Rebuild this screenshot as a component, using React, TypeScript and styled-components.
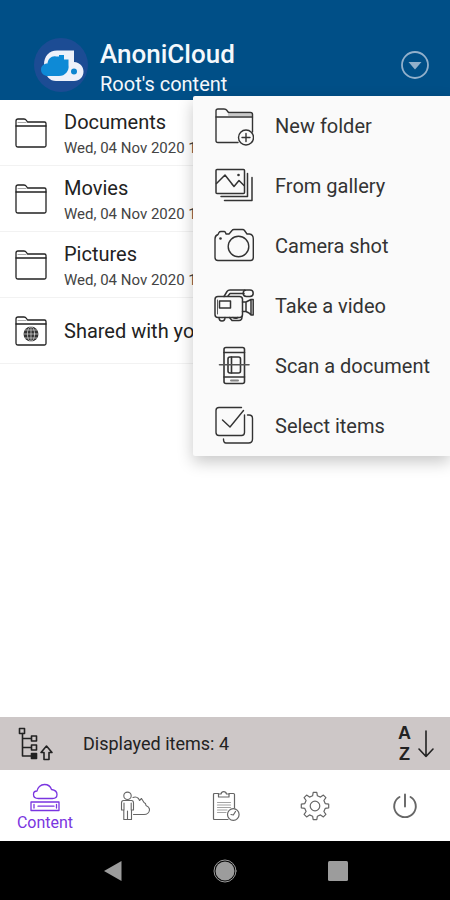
import React from "react";
import styled, { createGlobalStyle } from "styled-components";

const GlobalStyle = createGlobalStyle`
  * { box-sizing: border-box; }
  body { margin: 0; background: #fff; font-family: Roboto, "Noto Sans", sans-serif; color: #222; }
  button { border: 0; padding: 0; background: none; font: inherit; color: inherit; cursor: pointer; }
  ul { list-style: none; margin: 0; padding: 0; }
  svg { display: block; flex: none; }
`;

const Screen = styled.div`
  display: flex;
  flex-direction: column;
  min-height: 100vh;
  overflow: hidden;
`;

const Header = styled.header`
  position: relative;
  z-index: 1;
  display: flex;
  align-items: center;
  gap: 12px;
  height: 100px;
  padding: 30px 20px 0 34px;
  background: #004f87;
  color: #f4f8fc;
`;

const Titles = styled.div`
  flex: 1;
  padding-top: 8px;
`;

const Title = styled.h1`
  margin: 0;
  font-size: 26px;
  line-height: 30px;
  font-weight: 500;
`;

const Subtitle = styled.p`
  margin: 0;
  font-size: 20px;
  line-height: 30px;
`;

const Menu = styled.ul`
  position: absolute;
  top: 96px;
  right: 0;
  background: #fafafa;
  border-radius: 2px 0 0 2px;
  box-shadow: 0 6px 16px rgba(0, 0, 0, 0.22);
`;

const MenuItem = styled.button`
  display: flex;
  align-items: center;
  gap: 21px;
  width: 100%;
  height: 60px;
  padding: 0 20px 0 21px;
  font-size: 20px;
  line-height: 24px;
  color: #333;
  text-align: left;
  white-space: nowrap;
`;

const FileList = styled.ul`
  flex: 1;
`;

const FileRow = styled.li`
  border-bottom: 1px solid #f2f2f2;
`;

const FileButton = styled.button`
  display: flex;
  align-items: center;
  gap: 17px;
  width: 100%;
  height: 65px;
  padding: 0 15px;
  text-align: left;
  white-space: nowrap;
`;

const FileText = styled.span<{ $lines: number }>`
  display: flex;
  flex-direction: column;
  padding-top: ${(p) => (p.$lines > 1 ? "4px" : "0")};
`;

const FileName = styled.span`
  font-size: 20px;
  line-height: 26px;
`;

const FileDate = styled.span`
  font-size: 15px;
  line-height: 26px;
  color: #444;
`;

const Toolbar = styled.div`
  display: flex;
  align-items: center;
  height: 53px;
  padding: 0 16px 0 18px;
  background: #cdc7c7;
`;

const Count = styled.p`
  flex: 1;
  margin: 0;
  padding-left: 29px;
  font-size: 18px;
  line-height: 24px;
`;

const SortButton = styled.button`
  display: flex;
  align-items: center;
  gap: 7px;
`;

const Letters = styled.span`
  display: flex;
  flex-direction: column;
  font-family: "Liberation Sans", sans-serif;
  font-size: 18px;
  font-weight: 700;
  line-height: 21px;
  text-align: center;
`;

const Nav = styled.nav`
  display: grid;
  grid-template-columns: repeat(5, 1fr);
  height: 71px;
  background: #fff;
`;

const NavButton = styled.button<{ $active?: boolean }>`
  display: flex;
  flex-direction: column;
  align-items: center;
  justify-content: center;
  padding-top: ${(p) => (p.$active ? "4px" : "0")};
  color: ${(p) => (p.$active ? "#7a35e0" : "#666")};
  font-size: 16px;
  line-height: 20px;
`;

const SystemBar = styled.div`
  display: grid;
  grid-template-columns: repeat(3, 1fr);
  height: 59px;
  padding: 0 12.5%;
  background: #000;
`;

const SystemButton = styled.button`
  display: flex;
  align-items: center;
  justify-content: center;
  color: #9c9c9c;
`;

type IconProps = { w: number; h: number; stroke?: number; children: React.ReactNode };

const Icon = ({ w, h, stroke = 1.4, children }: IconProps) => (
  <svg
    width={w}
    height={h}
    viewBox={`0 0 ${w} ${h}`}
    fill="none"
    stroke="currentColor"
    strokeWidth={stroke}
    strokeLinecap="round"
    strokeLinejoin="round"
    aria-hidden="true"
  >
    {children}
  </svg>
);

const Logo = () => (
  <svg width="54" height="54" viewBox="0 0 54 54" aria-hidden="true">
    <circle cx="27" cy="27" r="27" fill="#1c4c94" />
    <path
      d="M10 27C10 18 15 12.500 23 12.500H40V24C46 24.500 49.500 28.500 49.500 33.500C49.500 39 45.500 43 40 43H22C16 43 11 39 10 27Z"
      fill="#eef1fa"
    />
    <path
      d="M7 31.500C7 28 10 25.500 13.500 25.500C14 20.500 18 17.500 22 18.500H25V17H30V21.500H34.500V27C35.500 33 31 38 25 38H14C10 38 7 35.500 7 31.500Z"
      fill="#0e8ad6"
    />
    <circle cx="40" cy="33.500" r="3" fill="#0e86d0" />
  </svg>
);

const DropIcon = () => (
  <Icon w={30} h={30} stroke={1.8}>
    <circle cx="15" cy="15" r="13" />
    <path d="M8.500 12H21.500L15 19.500Z" fill="currentColor" stroke="none" />
  </Icon>
);

const FolderIcon = ({ shared }: { shared?: boolean }) => (
  <Icon w={32} h={32} stroke={1.3}>
    <path d="M1 28V4Q1 2 3 2H9Q10.500 2 11.500 3.500L12.500 5H29.500Q31 5 31 6.500V28.500Q31 30 29.500 30H3Q1 30 1 28Z" />
    <path d="M1 9H31" />
    <path d="M3 5.500H11" strokeWidth="0.8" opacity="0.5" />
    {shared && (
      <g>
        <circle cx="16" cy="19" r="7.500" fill="#333" stroke="none" />
        <g stroke="#ddd" strokeWidth="0.7">
          <ellipse cx="16" cy="19" rx="3.600" ry="7.500" />
          <path d="M16 11.500V26.500M8.500 19H23.500M10 15H22M10 23H22" />
        </g>
      </g>
    )}
  </Icon>
);

const NewFolderIcon = () => (
  <Icon w={40} h={40}>
    <path d="M24 36.500H4Q2 36.500 2 34.500V5Q2 3 4 3H10Q12 3 13 4.500L14.500 6.500H36.500Q38.500 6.500 38.500 8.500V26" />
    <path d="M2 11H38.500" />
    <path d="M15 8.700H38" strokeWidth="2.500" opacity="0.25" />
    <circle cx="32" cy="31.500" r="7.500" />
    <path d="M32 27.500V35.500M28 31.500H36" />
  </Icon>
);

const GalleryIcon = () => (
  <Icon w={40} h={40} stroke={1.5}>
    <rect x="2" y="3.500" width="28.500" height="24" rx="1" />
    <path d="M2.500 17.500L11 9L20 20.500L25 14.500L30 19.500M20 20.500L17.500 17.500" />
    <circle cx="24.500" cy="9" r="1.300" fill="currentColor" stroke="none" />
    <path d="M33.500 7.500V30.500H7" />
    <path d="M38 11.500V34.500H10.500" />
  </Icon>
);

const CameraIcon = () => (
  <Icon w={40} h={40}>
    <path d="M4 34.500Q1 34.500 1 31.500V13Q1 9.500 4 8.500L5 6.500Q5.500 5.500 7 5.500H10Q11 5.500 11.500 6.500L12 8H15L18 4.500Q18.500 3.500 20 3.500H28.500Q30 3.500 30.500 4.500L33 8H35.500Q39.300 8.500 39.300 13V31.500Q39.300 34.500 36.500 34.500Z" />
    <circle cx="24.500" cy="20.500" r="10.300" />
    <circle cx="6.500" cy="12.500" r="1.300" fill="currentColor" stroke="none" />
  </Icon>
);

const VideoIcon = () => (
  <Icon w={40} h={40} stroke={1.5}>
    <rect x="1" y="10.500" width="27.500" height="21" rx="3" />
    <path d="M3.500 14V28" strokeWidth="0.8" />
    <rect x="5.500" y="15" width="11" height="7" />
    <path d="M10 10.500L13 5.500Q14 4 16 4H31M14 10L16 7.500H30" />
    <rect x="29.200" y="4" width="10" height="6.500" rx="3.200" />
    <path d="M28.500 16H32L35 14.500L37 13.500H39.200V29H37L35 27L32 25.500H28.500M32 16V25.500M37 14V29" />
    <path d="M5 31.500Q5 35 8 35Q11 35 11 31.500M15.500 31.500L18 34.500H25Q28 34.500 28 30.500M19 31.500Q21 33 24 31.500" />
  </Icon>
);

const ScanIcon = () => (
  <Icon w={40} h={40} stroke={1.6}>
    <rect x="10" y="1.500" width="20.500" height="36" rx="2" />
    <path d="M10 6.500H30.500M10 31H30.500" />
    <rect x="14" y="11" width="12.500" height="16" rx="2" />
    <path d="M17.500 11V27" />
    <path d="M17 34.500H24" strokeWidth="2" opacity="0.6" />
    <path d="M5.500 18.800H35" stroke="#555" />
  </Icon>
);

const SelectIcon = () => (
  <Icon w={40} h={40}>
    <path d="M27.500 1.500H5Q2 1.500 2 4.500V26.500Q2 29.500 5 29.500H27.500Q30.500 29.500 30.500 26.500V9" />
    <path d="M8.500 14L16 21L29.500 4.500" />
    <path d="M33.500 9H35Q38.500 9 38.500 12.500V33Q38.500 37 34.500 37H12Q9.500 37 9.500 33" />
  </Icon>
);

const TreeIcon = () => (
  <Icon w={36} h={34} stroke={1.6}>
    <rect x="1.500" y="1.500" width="5" height="5" />
    <path d="M4.500 6.500V29H13M4.500 11.500H13M4.500 20.500H13" />
    <rect x="13.500" y="9" width="5" height="5" />
    <rect x="13.500" y="18" width="5" height="5" />
    <rect x="13.500" y="26.500" width="5" height="5" fill="currentColor" />
    <path d="M28.500 19L34 25.500H31V32.500H26V25.500H23Z" />
  </Icon>
);

const DownArrow = () => (
  <Icon w={16} h={28} stroke={1.6}>
    <path d="M8 1V26.500M1 19L8 26.500L15 19" />
  </Icon>
);

const ContentIcon = () => (
  <Icon w={30} h={30} stroke={1.3}>
    <path d="M8.500 15.500C5 15.500 3.500 13.500 3.500 11.500C3.500 9.500 5 8 7 8C7.500 4.500 10.500 1.500 14.500 1.500C18 1.500 20.500 3.500 21.500 6.500C25 7 27 9 27 11.500C27 14 25 15.500 22.500 15.500Z" />
    <rect x="1" y="19" width="28" height="8.500" />
    <path d="M4 21.500V25M8 23.200H24M26.500 21.500V25" />
  </Icon>
);

const PersonCloudIcon = () => (
  <Icon w={30} h={30} stroke={1.1}>
    <circle cx="7.500" cy="4.800" r="3.700" />
    <path d="M3.500 9.500H11.500Q13.500 9.500 13.500 12V19H11.500V28.500H3.800V19H1.500V12Q1.500 9.500 3.500 9.500ZM4 12V19M11.200 12V19M7.500 20V28.500" />
    <path d="M13 6.500C15 5.500 17 6 18.500 7.500L19.500 9.500L21.500 7.500L24 11.500C25.500 12 26 13 26 14.500C28.500 15.500 29.500 17 29.500 18.500C29.500 21.500 27 23.500 24 23.500H13.500" />
  </Icon>
);

const ClipboardIcon = () => (
  <Icon w={30} h={30} stroke={1.2}>
    <g transform="translate(2 0)">
      <path d="M16 28.500H2.500Q1.500 28.500 1.500 27.500V3.500Q1.500 2.500 2.500 2.500H6.500V6H17V2.500H21.500Q22.500 2.500 22.500 3.500V17" />
      <path d="M6.500 3H9Q9.500 0.700 11.700 0.700Q14 0.700 14.500 3H17" />
      <path d="M5.500 11.500H18.500M5.500 14H18.500M5.500 16.500H18.500M5.500 19H15M5.500 21.500H14" opacity="0.6" />
      <circle cx="21.300" cy="23.500" r="5.800" fill="#fff" />
      <path d="M23.500 20.500L21.300 24L19 23.500" />
    </g>
  </Icon>
);

const GearIcon = () => (
  <Icon w={30} h={30} stroke={1.2}>
    <path d="M12.600 4.800L13.200 1.300H16.800L17.400 4.800L20.500 6.100L23.400 4.100L25.900 6.600L23.900 9.500L25.200 12.600L28.700 13.200V16.800L25.200 17.400L23.900 20.500L25.900 23.400L23.400 25.900L20.500 23.900L17.400 25.200L16.800 28.700H13.200L12.600 25.200L9.500 23.900L6.600 25.900L4.100 23.400L6.100 20.500L4.800 17.400L1.300 16.800V13.200L4.800 12.600L6.100 9.500L4.100 6.600L6.600 4.100L9.500 6.100Z" />
    <circle cx="15" cy="15" r="4.800" />
  </Icon>
);

const PowerIcon = () => (
  <Icon w={30} h={30} stroke={1.9}>
    <path d="M15 3.500V15.500M9.500 6A10.800 10.800 0 1 0 20.500 6" />
  </Icon>
);

const files = [
  { name: "Documents", date: "Wed, 04 Nov 2020 10:30" },
  { name: "Movies", date: "Wed, 04 Nov 2020 10:30" },
  { name: "Pictures", date: "Wed, 04 Nov 2020 10:30" },
  { name: "Shared with you", shared: true },
];

const actions = [
  { label: "New folder", Glyph: NewFolderIcon },
  { label: "From gallery", Glyph: GalleryIcon },
  { label: "Camera shot", Glyph: CameraIcon },
  { label: "Take a video", Glyph: VideoIcon },
  { label: "Scan a document", Glyph: ScanIcon },
  { label: "Select items", Glyph: SelectIcon },
];

const tabs = [
  { name: "Shared", Glyph: PersonCloudIcon },
  { name: "Tasks", Glyph: ClipboardIcon },
  { name: "Settings", Glyph: GearIcon },
  { name: "Exit", Glyph: PowerIcon },
];

const MenuToggle = styled.button`
  color: #92b0cb;
`;

export default function App() {
  return (
    <Screen>
      <GlobalStyle />
      <Header>
        <Logo />
        <Titles>
          <Title>AnoniCloud</Title>
          <Subtitle>Root's content</Subtitle>
        </Titles>
        <MenuToggle aria-label="Actions" aria-expanded="true">
          <DropIcon />
        </MenuToggle>
        <Menu>
          {actions.map(({ label, Glyph }) => (
            <li key={label}>
              <MenuItem>
                <Glyph />
                {label}
              </MenuItem>
            </li>
          ))}
        </Menu>
      </Header>
      <FileList>
        {files.map((f) => (
          <FileRow key={f.name}>
            <FileButton>
              <FolderIcon shared={f.shared} />
              <FileText $lines={f.date ? 2 : 1}>
                <FileName>{f.name}</FileName>
                {f.date && <FileDate>{f.date}</FileDate>}
              </FileText>
            </FileButton>
          </FileRow>
        ))}
      </FileList>
      <Toolbar>
        <button aria-label="Parent folder">
          <TreeIcon />
        </button>
        <Count>Displayed items: 4</Count>
        <SortButton aria-label="Sort A to Z">
          <Letters>
            <span>A</span>
            <span>Z</span>
          </Letters>
          <DownArrow />
        </SortButton>
      </Toolbar>
      <Nav>
        <NavButton $active>
          <ContentIcon />
          Content
        </NavButton>
        {tabs.map(({ name, Glyph }) => (
          <NavButton key={name} aria-label={name}>
            <Glyph />
          </NavButton>
        ))}
      </Nav>
      <SystemBar>
        <SystemButton aria-label="Back">
          <Icon w={24} h={24}>
            <path d="M3 12L20.500 2V22Z" fill="currentColor" stroke="none" />
          </Icon>
        </SystemButton>
        <SystemButton aria-label="Home">
          <Icon w={24} h={24} stroke={1}>
            <circle cx="12" cy="12" r="11" />
            <circle cx="12" cy="12" r="9.500" fill="currentColor" stroke="none" />
          </Icon>
        </SystemButton>
        <SystemButton aria-label="Recent apps">
          <Icon w={24} h={24}>
            <rect x="2" y="2" width="20" height="20" rx="1.500" fill="currentColor" stroke="none" />
          </Icon>
        </SystemButton>
      </SystemBar>
    </Screen>
  );
}
